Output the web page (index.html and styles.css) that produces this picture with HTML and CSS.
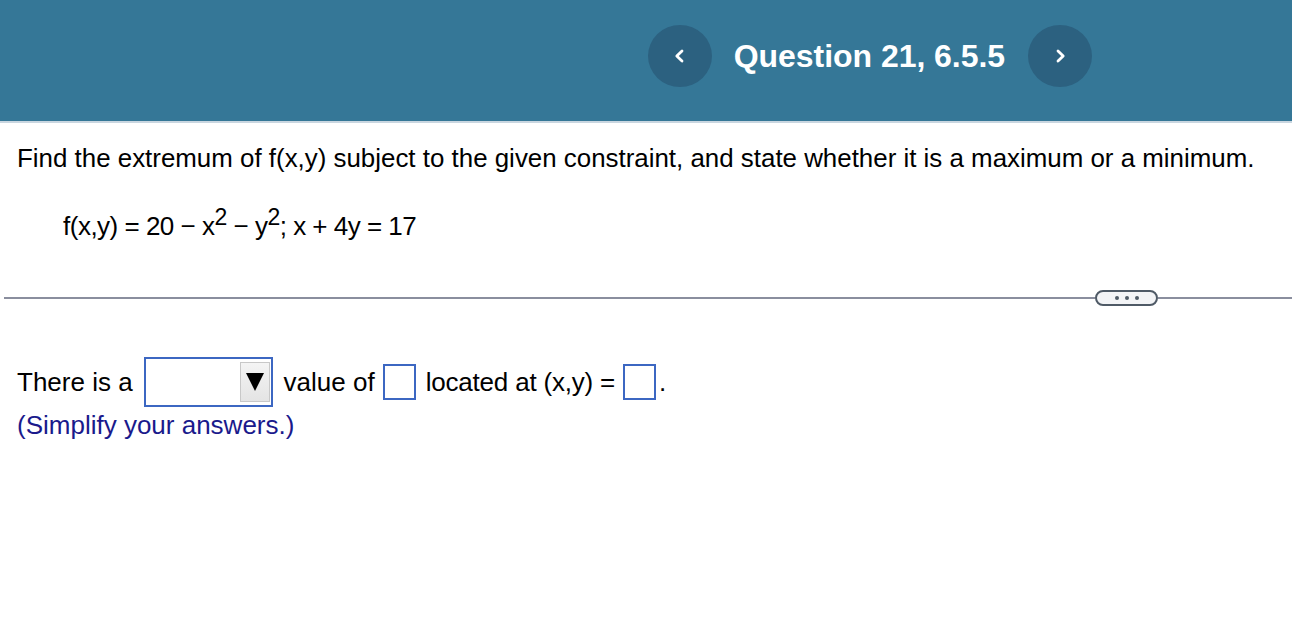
FILE: index.html
```html
<!DOCTYPE html>
<html>
<head>
<meta charset="utf-8">
<link rel="stylesheet" href="styles.css">
</head>
<body>
<header class="top">
  <div class="nav">
    <button class="circ" aria-label="Previous">
      <svg width="16" height="16" viewBox="0 0 16 16"><path d="M10 3 L4.8 8 L10 13" fill="none" stroke="#fff" stroke-width="2.8" stroke-linecap="round" stroke-linejoin="round"/></svg>
    </button>
    <h1 class="title">Question 21, 6.5.5</h1>
    <button class="circ" aria-label="Next">
      <svg width="16" height="16" viewBox="0 0 16 16"><path d="M6 3 L11.2 8 L6 13" fill="none" stroke="#fff" stroke-width="2.8" stroke-linecap="round" stroke-linejoin="round"/></svg>
    </button>
  </div>
</header>
<main class="content">
  <p class="prompt">Find the extremum of f(x,y) subject to the given constraint, and state whether it is a maximum or a minimum.</p>
  <p class="formula">f(x,y) = 20 − x<sup>2</sup> − y<sup>2</sup>; x + 4y = 17</p>
  <div class="divider">
    <span class="line"></span>
    <span class="more"><i></i><i></i><i></i></span>
    <span class="line tail"></span>
  </div>
  <div class="answer">
    <span>There is a</span>
    <span class="select"><span class="arrow"><span class="tri"></span></span></span>
    <span>value of</span>
    <span class="box"></span>
    <span class="tight">located at (x,y) =</span>
    <span class="box"></span>
    <span class="dot">.</span>
  </div>
  <p class="hint">(Simplify your answers.)</p>
</main>
</body>
</html>
```
FILE: styles.css
```css
html, body {
  margin: 0;
  padding: 0;
  background: #fff;
  font-family: "Liberation Sans", Arial, sans-serif;
  color: #000;
}
.top {
  height: 121px;
  background: #357797;
  border-bottom: 2px solid #c9d6e0;
  display: flex;
  justify-content: flex-end;
  align-items: flex-start;
}
.nav {
  display: flex;
  align-items: center;
  margin-top: 25px;
  margin-right: 200px;
}
.circ {
  width: 64px;
  height: 62px;
  border-radius: 50%;
  border: none;
  background: #2c6180;
  display: flex;
  align-items: center;
  justify-content: center;
  padding: 0;
}
.title {
  margin: 0 23px 0 22px;
  font-size: 32px;
  font-weight: bold;
  color: #fff;
  letter-spacing: -0.05px;
}
.content {
  padding: 0 0 0 17px;
}
.prompt {
  margin: 0;
  padding-top: 20px;
  font-size: 25.9px;
  line-height: 30px;
}
.formula {
  margin: 38px 0 0 46px;
  font-size: 26px;
  line-height: 30px;
  letter-spacing: -0.5px;
}
.formula sup {
  font-size: 23px;
  line-height: 0;
  vertical-align: 10px;
}
.divider {
  display: flex;
  align-items: center;
  margin: 47px 0 0 -13px;
  height: 20px;
}
.line {
  height: 2px;
  background: #8a8e9e;
  flex: 1;
}
.line.tail {
  flex: 0 0 134px;
}
.more {
  width: 59px;
  height: 12px;
  border: 2px solid #4f5a66;
  border-radius: 8px;
  background: #f3f4f6;
  display: flex;
  align-items: center;
  justify-content: center;
  gap: 6px;
}
.more i {
  width: 4px;
  height: 4px;
  border-radius: 50%;
  background: #4f5a66;
}
.answer {
  margin-top: 48px;
  display: flex;
  align-items: center;
  font-size: 26px;
  height: 52px;
}
.select {
  width: 124px;
  height: 46px;
  border: 2px solid #3c67c2;
  margin: 0 11px 0 11px;
  display: flex;
  justify-content: flex-end;
  align-items: center;
  padding-right: 1px;
}
.arrow {
  width: 28px;
  height: 38px;
  background: linear-gradient(#f4f4f4, #e4e4e4);
  border: 1px solid #c8c8c8;
  display: flex;
  align-items: center;
  justify-content: center;
}
.tri {
  width: 0;
  height: 0;
  border-left: 9px solid transparent;
  border-right: 9px solid transparent;
  border-top: 18px solid #000;
}
.box {
  width: 29px;
  height: 32px;
  border: 2px solid #3c67c2;
  margin: 0 10px 0 8px;
}
.tight {
  letter-spacing: -0.2px;
}
.box + .dot {
  margin-left: -7px;
}
.hint {
  margin: 2px 0 0;
  font-size: 26px;
  line-height: 30px;
  color: #1a1a8c;
}
```
